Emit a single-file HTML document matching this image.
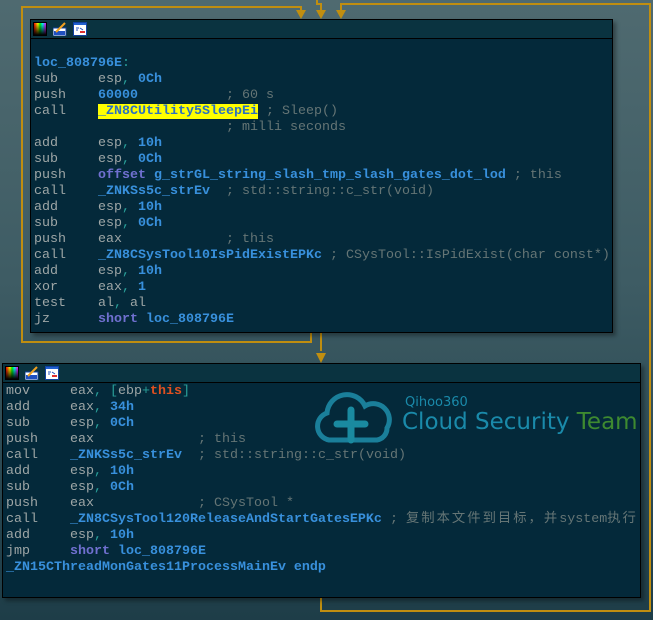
<!DOCTYPE html><html><head><meta charset="utf-8"><style>
*{margin:0;padding:0}
body{width:653px;height:620px;overflow:hidden;position:relative;background:linear-gradient(180deg,#4f6a70 0%,#3e5c64 45%,#1e3d48 100%);font-family:"Liberation Mono","Noto Sans CJK SC",monospace;font-size:13.33px}
.box{position:absolute;background:#04293a;border:1px solid #000;box-shadow:3px 3px 4px rgba(0,0,0,.35)}
.tb{height:18px;border-bottom:1px solid #000;background:#0a3340;position:relative}
.ic{position:absolute;top:2px;width:14px;height:14px}
.code{position:absolute;left:3px;white-space:pre;line-height:16px;color:#9ea6a6}
.b{color:#3890dc;font-weight:bold}.p{color:#7070d0;font-weight:bold}.c{color:#657575}.t{color:#2aa09a}.r{color:#e05020;font-weight:bold}
.hl{background:#ffff00;color:#2a70c0;font-weight:bold}
.cj{letter-spacing:2px}
.ln{position:absolute;background:#c08e10}
</style></head><body>
<div class="ln" style="left:22px;top:6px;width:280px;height:2px"></div>
<div class="ln" style="left:21px;top:6px;width:2px;height:337px"></div>
<div class="ln" style="left:21px;top:341px;width:291px;height:2px"></div>
<div class="ln" style="left:310px;top:330px;width:2px;height:13px"></div>
<div class="ln" style="left:300px;top:6px;width:2px;height:8px"></div>
<div class="ln" style="left:316px;top:0px;width:2px;height:4px"></div>
<div class="ln" style="left:316px;top:3px;width:5px;height:2px"></div>
<div class="ln" style="left:320px;top:3px;width:2px;height:11px"></div>
<div class="ln" style="left:340px;top:3px;width:311px;height:2px"></div>
<div class="ln" style="left:340px;top:3px;width:2px;height:11px"></div>
<div class="ln" style="left:649px;top:3px;width:2px;height:609px"></div>
<div class="ln" style="left:321px;top:610px;width:330px;height:2px"></div>
<div class="ln" style="left:320px;top:596px;width:2px;height:16px"></div>
<div class="ln" style="left:320px;top:333px;width:2px;height:18px"></div>
<svg style="position:absolute;left:0;top:0" width="653" height="620"><g fill="#c08e10">
<polygon points="296,10 306,10 301,19"/><polygon points="316,10 326,10 321,19"/><polygon points="336,10 346,10 341,19"/><polygon points="316,353 326,353 321,363"/></g></svg>

<div class="box" style="left:30px;top:19px;width:581px;height:312px">
<div class="tb"><svg class="ic" style="left:2px" viewBox="0 0 14 14"><defs><linearGradient id="g" x1="0" x2="1"><stop offset="0" stop-color="#f00"/><stop offset=".33" stop-color="#ff0"/><stop offset=".5" stop-color="#0f0"/><stop offset=".7" stop-color="#0ff"/><stop offset="1" stop-color="#f0f"/></linearGradient><linearGradient id="k" y1="0" y2="1" x1="0" x2="0"><stop offset="0" stop-color="#000" stop-opacity="0"/><stop offset="1" stop-color="#000"/></linearGradient></defs><rect width="14" height="14" fill="#000"/><rect x="1" y="1" width="12" height="12" fill="url(#g)"/><rect x="1" y="1" width="12" height="12" fill="url(#k)"/></svg>
<svg class="ic" style="left:22px" viewBox="0 0 14 14"><rect x="0" y="6" width="13" height="8" fill="#fff" stroke="#1040a0"/><rect x="1" y="9" width="11" height="4" fill="#2050c0"/><line x1="3" y1="10" x2="12" y2="1" stroke="#f0a020" stroke-width="2"/></svg>
<svg class="ic" style="left:42px" viewBox="0 0 14 14"><rect x=".5" y=".5" width="13" height="13" fill="#fff" stroke="#1040a0"/><rect x="1" y="1" width="12" height="2" fill="#2060d0"/><path d="M3 6h3M3 8h2M7 6l3 2" stroke="#2050c0"/><rect x="7" y="9" width="5" height="2" fill="#e03030"/></svg></div>
<div class="code" style="top:36px"><span class="b">loc_808796E</span><span class="t">:</span>
sub     esp<span class="t">,</span> <span class="b">0Ch</span>
push    <span class="b">60000</span>           <span class="c">; 60 s</span>
call    <span class="hl">_ZN8CUtility5SleepEi</span> <span class="c">; Sleep()</span>
                        <span class="c">; milli seconds</span>
add     esp<span class="t">,</span> <span class="b">10h</span>
sub     esp<span class="t">,</span> <span class="b">0Ch</span>
push    <span class="p">offset</span> <span class="b">g_strGL_string_slash_tmp_slash_gates_dot_lod</span> <span class="c">; this</span>
call    <span class="b">_ZNKSs5c_strEv</span>  <span class="c">; std::string::c_str(void)</span>
add     esp<span class="t">,</span> <span class="b">10h</span>
sub     esp<span class="t">,</span> <span class="b">0Ch</span>
push    eax             <span class="c">; this</span>
call    <span class="b">_ZN8CSysTool10IsPidExistEPKc</span> <span class="c">; CSysTool::IsPidExist(char const*)</span>
add     esp<span class="t">,</span> <span class="b">10h</span>
xor     eax<span class="t">,</span> <span class="b">1</span>
test    al<span class="t">,</span> al
jz      <span class="p">short</span> <span class="b">loc_808796E</span></div></div>

<div class="box" style="left:2px;top:363px;width:637px;height:233px">
<div class="tb"><svg class="ic" style="left:2px" viewBox="0 0 14 14"><rect width="14" height="14" fill="#000"/><rect x="1" y="1" width="12" height="12" fill="url(#g)"/><rect x="1" y="1" width="12" height="12" fill="url(#k)"/></svg>
<svg class="ic" style="left:22px" viewBox="0 0 14 14"><rect x="0" y="6" width="13" height="8" fill="#fff" stroke="#1040a0"/><rect x="1" y="9" width="11" height="4" fill="#2050c0"/><line x1="3" y1="10" x2="12" y2="1" stroke="#f0a020" stroke-width="2"/></svg>
<svg class="ic" style="left:42px" viewBox="0 0 14 14"><rect x=".5" y=".5" width="13" height="13" fill="#fff" stroke="#1040a0"/><rect x="1" y="1" width="12" height="2" fill="#2060d0"/><path d="M3 6h3M3 8h2M7 6l3 2" stroke="#2050c0"/><rect x="7" y="9" width="5" height="2" fill="#e03030"/></svg></div>
<svg style="position:absolute;left:306px;top:24px" width="90" height="60" viewBox="0 0 90 60"><path d="M20 52 A14 14 0 0 1 18 25 A20 20 0 0 1 56 18 A16 16 0 0 1 78 40 A12 12 0 0 1 68 52 Z" fill="none" stroke="#1a7f9a" stroke-width="5"/><path d="M42 22v30M28 36h28" stroke="#1a8aa0" stroke-width="7" stroke-linecap="round"/></svg>
<div style="position:absolute;left:402px;top:31px;color:#1a8aaa;font-family:'DejaVu Sans',sans-serif;font-size:13px">Qihoo360</div>
<div style="position:absolute;left:399px;top:45px;font-family:'DejaVu Sans',sans-serif;font-size:23px;color:#1a8aaa;white-space:nowrap">Cloud Security <span style="color:#3e8a30">Team</span></div>
<div class="code" style="top:20px">mov     eax<span class="t">,</span> <span class="t">[</span>ebp<span class="t">+</span><span class="r">this</span><span class="t">]</span>
add     eax<span class="t">,</span> <span class="b">34h</span>
sub     esp<span class="t">,</span> <span class="b">0Ch</span>
push    eax             <span class="c">; this</span>
call    <span class="b">_ZNKSs5c_strEv</span>  <span class="c">; std::string::c_str(void)</span>
add     esp<span class="t">,</span> <span class="b">10h</span>
sub     esp<span class="t">,</span> <span class="b">0Ch</span>
push    eax             <span class="c">; CSysTool *</span>
call    <span class="b">_ZN8CSysTool120ReleaseAndStartGatesEPKc</span> <span class="c">; <span class="cj">复制本文件到目标，并</span>system<span class="cj">执行</span></span>
add     esp<span class="t">,</span> <span class="b">10h</span>
jmp     <span class="p">short</span> <span class="b">loc_808796E</span>
<span class="b">_ZN15CThreadMonGates11ProcessMainEv endp</span></div></div>
</body></html>
